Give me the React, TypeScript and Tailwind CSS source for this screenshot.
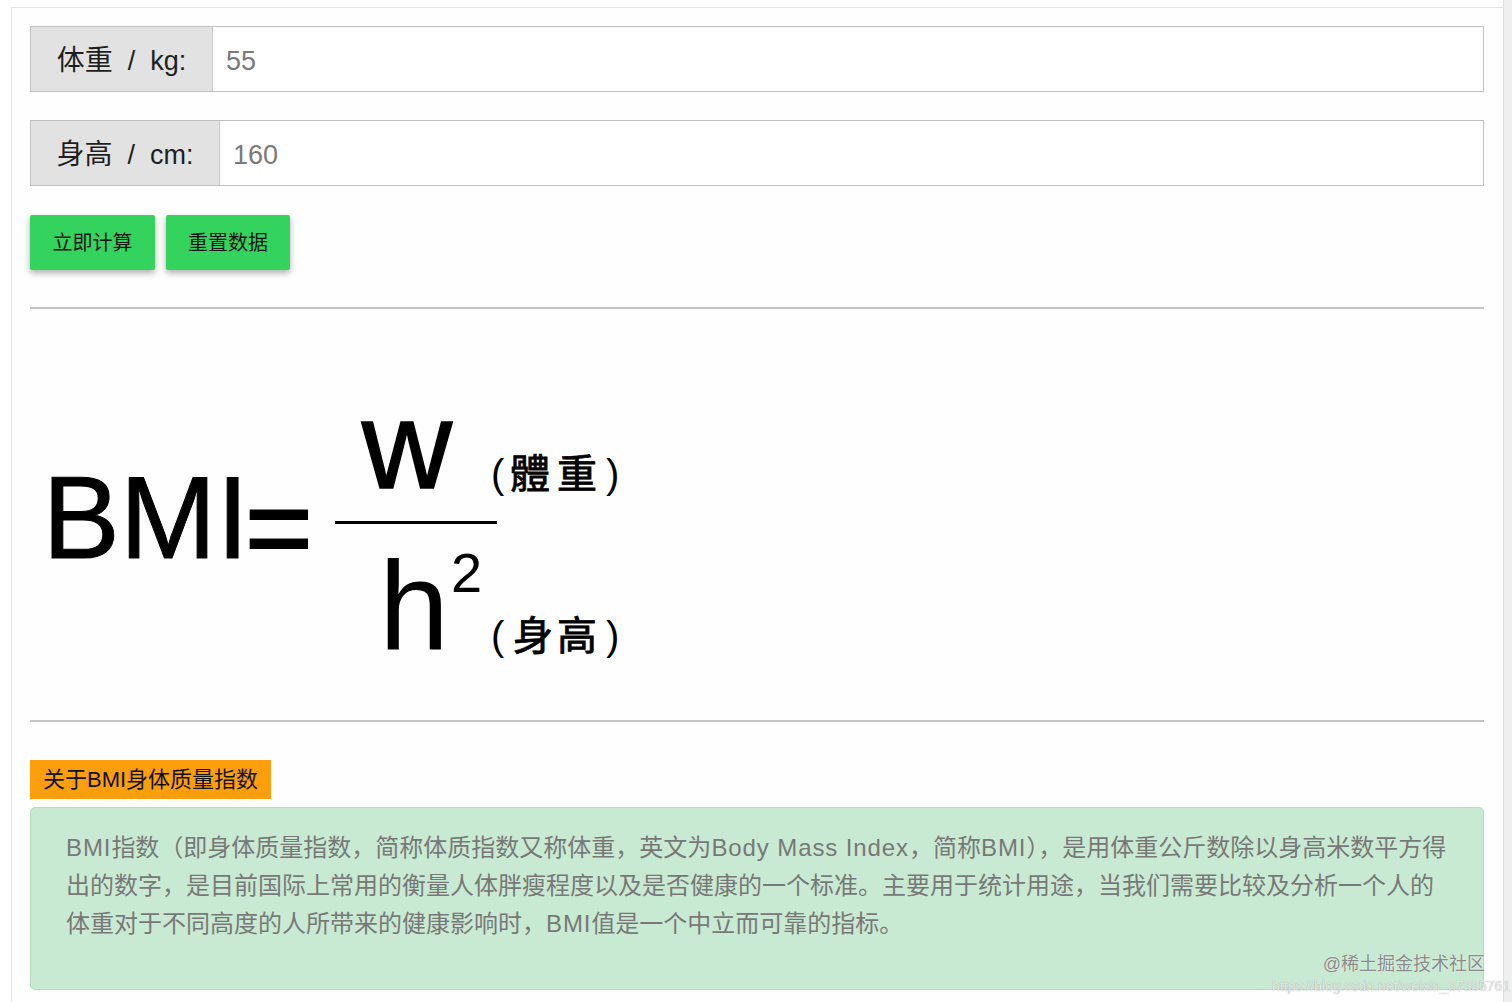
import React from "react";

const FONT = '"Liberation Sans", "Noto Sans CJK SC", sans-serif';

function Formula() {
  return (
    <svg
      width="610"
      height="411"
      viewBox="30 309 610 411"
      className="block"
      style={{ fontFamily: '"Liberation Sans", Arial, sans-serif' }}
    >
      <text x="42.5" y="558" fontSize="116" fill="#000" stroke="#000" strokeWidth="1">BMI</text>
      <text x="245" y="568" fontSize="116" fill="#000" stroke="#000" strokeWidth="2">=</text>
      <text x="407" y="488" fontSize="125" fill="#000" textAnchor="middle" stroke="#000" strokeWidth="1.5">w</text>
      <rect x="335" y="521" width="162" height="3" fill="#000" />
      <text x="379" y="650" fontSize="126" fill="#000">h</text>
      <text x="451" y="592" fontSize="56" fill="#000">2</text>
      <g style={{ fontFamily: '"Noto Sans CJK TC", "Noto Sans CJK SC", sans-serif' }} fill="#000">
        <text x="491" y="488" fontSize="40" fontFamily='"Liberation Sans", sans-serif'>(</text>
        <text x="530" y="488" fontSize="40" textAnchor="middle" stroke="#000" strokeWidth="0.8">體</text>
        <text x="577" y="488" fontSize="40" textAnchor="middle" stroke="#000" strokeWidth="0.8">重</text>
        <text x="606" y="488" fontSize="40" fontFamily='"Liberation Sans", sans-serif'>)</text>
        <text x="491" y="650" fontSize="40" fontFamily='"Liberation Sans", sans-serif'>(</text>
        <text x="533" y="650" fontSize="40" textAnchor="middle" stroke="#000" strokeWidth="0.8">身</text>
        <text x="577" y="650" fontSize="40" textAnchor="middle" stroke="#000" strokeWidth="0.8">高</text>
        <text x="606" y="650" fontSize="40" fontFamily='"Liberation Sans", sans-serif'>)</text>
      </g>
    </svg>
  );
}

function InputRow({ cn, unit, value, labelWidth, mt }: { cn: string; unit: string; value: string; labelWidth: string; mt: string }) {
  return (
    <div className={`flex h-[66px] border border-[#c0c0c0] ${mt}`}>
      <div
        className={`${labelWidth} flex shrink-0 items-center justify-center whitespace-pre border-r border-[#cacaca] bg-[#e2e2e2] pt-[4px] text-[27px] text-[#1e1e1e]`}
      >
        <span className="text-[28px]">{cn}</span>
        <span>{"  /  "}</span>
        <span>{unit}</span>
      </div>
      <div className="flex flex-1 items-center bg-white pl-[13px] pt-[4px] text-[27px] text-[#7a7a7a]">{value}</div>
    </div>
  );
}

function L({ children }: { children: React.ReactNode }) {
  return <span className="tracking-[0.9px]">{children}</span>;
}

export default function App() {
  return (
    <div className="relative flex h-[1002px] w-[1512px] overflow-hidden bg-white" style={{ fontFamily: FONT }}>
      <div className="flex-1 pl-[11px] pt-[7px]">
        <div className="h-full border-l border-t border-[#e4e4e4] bg-[#fefefe] pl-[18px] pr-[19px] pt-[18px]">
          <InputRow cn="体重" unit="kg:" value="55" labelWidth="w-[182px]" mt="" />
          <InputRow cn="身高" unit="cm:" value="160" labelWidth="w-[189px]" mt="mt-[28px]" />

          <div className="mt-[29px] flex gap-[11px]">
            <button className="flex h-[55px] w-[125px] items-center justify-center rounded-[2px] bg-[#34d35e] text-[20px] text-[#141414] shadow-[0_3px_6px_rgba(0,0,0,0.32)]">
              立即计算
            </button>
            <button className="flex h-[55px] w-[124px] items-center justify-center rounded-[2px] bg-[#34d35e] text-[20px] text-[#141414] shadow-[0_3px_6px_rgba(0,0,0,0.32)]">
              重置数据
            </button>
          </div>

          <div className="mt-[37px] h-[2px] bg-[#c4c4c4]" />
          <div className="h-[411px]">
            <Formula />
          </div>
          <div className="h-[2px] bg-[#c4c4c4]" />

          <div className="mt-[38px] flex h-[39px] w-[241px] items-center whitespace-nowrap bg-[#fd9f0c] pl-[13px] text-[22px] text-[#111]">
            关于BMI身体质量指数
          </div>

          <div className="mt-[8px] h-[183px] rounded-[5px] border border-[#b4dcbe] bg-[#c9ead2] pl-[35px] pr-[10px] pt-[21px] text-[24px] leading-[38px] text-[#787878]">
            <div className="whitespace-nowrap">
              <L>BMI</L>指数（即身体质量指数，简称体质指数又称体重，英文为<L>Body Mass Index</L>，简称<L>BMI</L>），是用体重公斤数除以身高米数平方得
            </div>
            <div className="whitespace-nowrap">
              出的数字，是目前国际上常用的衡量人体胖瘦程度以及是否健康的一个标准。主要用于统计用途，当我们需要比较及分析一个人的
            </div>
            <div className="whitespace-nowrap">
              体重对于不同高度的人所带来的健康影响时，<L>BMI</L>值是一个中立而可靠的指标。
            </div>
          </div>
        </div>
      </div>
      <div className="w-[9px] border-l border-[#e2e2e2] bg-[#efefef]" />

      <div
        className="absolute right-[27px] top-[953px] text-[18px] leading-[22px] text-[#8a8a8a]"
        style={{ textShadow: "0 0 1px #ffffff" }}
      >
        @稀土掘金技术社区
      </div>
      <div
        className="absolute left-[1272px] top-[977px] whitespace-nowrap text-[14px] leading-[18px] text-white/70"
        style={{ textShadow: "0 0 1px #9a9a9a" }}
      >
        https://blog.csdn.net/weixin_37335761
      </div>
    </div>
  );
}
